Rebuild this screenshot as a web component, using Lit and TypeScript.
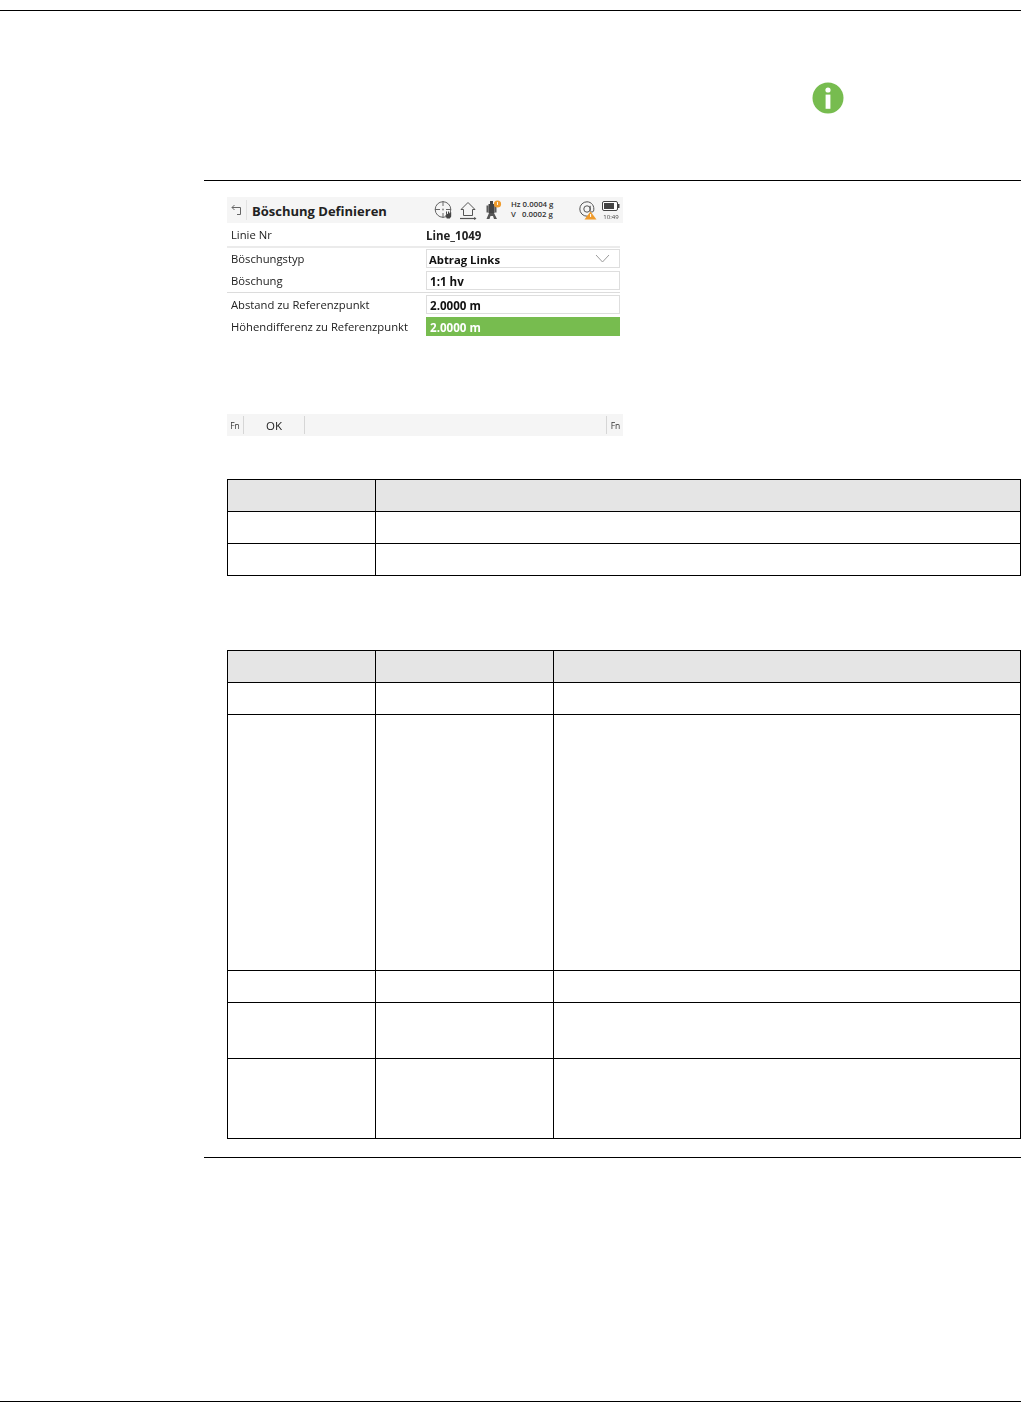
import { LitElement, html, css } from "lit";
import { customElement } from "lit/decorators.js";

@customElement("app-root")
export class AppRoot extends LitElement {
  static styles = css`
    :host { display: block; width: 1021px; height: 1402px; overflow: hidden; background: #fff; font-family: "Open Sans", "Liberation Sans", sans-serif; }
    .page { display: flex; flex-direction: column; height: 1402px; }
    .rule { height: 1px; background: #000; flex: none; }
    .rule-top { margin-top: 10px; }
    .rule-sec { margin-left: 204px; }
    .info { display: block; flex: none; margin: 71px 0 66px 812px; width: 32px; height: 32px; }
    .screen { flex: none; margin: 16px 0 0 227px; width: 396px; height: 239px; display: flex; flex-direction: column; color: #222; font-size: 11.25px; filter: blur(0.4px); }
    .head { flex: none; height: 26px; background: #f5f5f5; display: flex; align-items: center; }
    .back { flex: none; margin-left: 4px; width: 12px; height: 12px; }
    .head-sep { flex: none; width: 1px; height: 20px; background: #e2e2e2; margin-left: 3px; }
    .title { flex: none; width: 188px; margin-left: 5px; padding-top: 2px; font-weight: 700; font-size: 13px; color: #222; white-space: nowrap; }
    .ic { flex: none; display: block; }
    .ic-target { width: 20px; height: 20px; margin-left: -6px; }
    .ic-house { width: 20px; height: 20px; margin-left: 4px; }
    .ic-tps { width: 20px; height: 20px; margin-left: 5px; }
    .hz { flex: none; width: 65px; margin-left: 8px; margin-bottom: 2px; font-size: 7.8px; font-weight: 600; line-height: 10px; color: #333; white-space: pre; }
    .ic-at { width: 18px; height: 20px; margin-left: 3px; }
    .batt { flex: none; margin-left: 5px; width: 18px; display: flex; flex-direction: column; align-items: center; gap: 2px; padding-top: 1px; }
    .ic-batt { width: 18px; height: 10px; }
    .time { font-size: 6px; line-height: 8px; color: #444; }
    .row { flex: none; display: flex; align-items: center; height: 19px; }
    .label { flex: none; width: 199px; padding-left: 4px; box-sizing: border-box; white-space: nowrap; }
    .nr { height: 23px; }
    .val { font-weight: 700; font-size: 11.5px; white-space: nowrap; padding-top: 1px; }
    .div { flex: none; background: #ebebeb; margin-right: 3px; }
    .div-a { height: 2px; margin-bottom: 1px; }
    .div-b { height: 1px; background: #dcdcdc; margin: 2px 3px 2px 0; }
    .field { flex: none; width: 194px; height: 19px; box-sizing: border-box; border: 1px solid #dedede; display: flex; align-items: center; justify-content: space-between; padding: 1px 9px 0 2px; font-size: 11.3px; font-weight: 700; color: #111; white-space: nowrap; }
    .field.num { padding-left: 3px; font-size: 11.6px; }
    .field.sel { background: #77bc4f; border-color: #77bc4f; color: #fff; }
    .gap { flex: none; height: 3px; }
    .chev { width: 15px; height: 9px; flex: none; margin-top: -1px; }
    .spacer { flex: 1; }
    .foot { flex: none; height: 22px; background: #f5f5f5; display: flex; align-items: center; }
    .fn { flex: none; width: 16px; text-align: center; font-size: 8.5px; color: #333; }
    .fn-r { width: 15px; padding-left: 1px; }
    .vsep { flex: none; width: 1px; height: 18px; background: #d6d6d6; }
    .ok { flex: none; width: 60px; text-align: center; font-size: 11.5px; color: #222; }
    .foot-fill { flex: 1; }
    table { flex: none; border-collapse: collapse; table-layout: fixed; width: 794px; margin-left: 227px; }
    td, th { border: 1px solid #000; padding: 0; height: 31px; }
    th { background: #e5e5e5; }
    .t1 { margin-top: 43px; }
    .t2 { margin-top: 74px; }
    .h2 { height: 255px; }
    .h3 { height: 55px; }
    .h4 { height: 79px; }
    .rule-end { margin-top: 18px; }
    .rule-foot { margin-top: auto; }
  `;

  render() {
    return html`<div class="page">
      <div class="rule rule-top"></div>
      <svg class="info" viewBox="0 0 32 32"><circle cx="16" cy="16" r="15.5" fill="#77bc4f"/><circle cx="16" cy="8" r="2.6" fill="#fff"/><rect x="13.6" y="12.6" width="4.8" height="14.2" fill="#fff"/></svg>
      <div class="rule rule-sec"></div>
      <div class="screen">
        <div class="head">
          <svg class="back" viewBox="0 0 12 12" fill="none" stroke="#666" stroke-width="1"><path d="M1 3.5H9.5V10.5H6"/><path d="M3.5 1L1 3.5L3.5 6"/></svg>
          <div class="head-sep"></div>
          <div class="title">Böschung Definieren</div>
          <svg class="ic ic-target" viewBox="0 0 20 20" fill="none" stroke="#666" stroke-width="1"><circle cx="9" cy="9.5" r="7.8"/><path d="M9 1V6M9 13V18M1 9.5H6M12 9.5H17" /><circle cx="9" cy="9.5" r="1" fill="#888" stroke="none"/><path d="M12 11.5h1v2.5l1-.3v-2.2h1v2.2l1 .2v-1.6h1.2v4.2l-1.4 2h-3l-1.6-3.2h1z" fill="#444" stroke="none"/></svg>
          <svg class="ic ic-house" viewBox="0 0 20 20" fill="none" stroke="#555" stroke-width="1"><path d="M3 9.5L10 2.5L17 9.5H14.5V15.5H5.5V9.5Z"/><path d="M2 18.5H18" stroke-width="1.2"/><path d="M16 17l2.5 1.5L16 20" fill="#555" stroke="none"/></svg>
          <svg class="ic ic-tps" viewBox="0 0 20 20"><path d="M7 1h3v3h1.5v9H5.5V4H7z" fill="#444"/><path d="M3.5 5.5h2v7h-2zM11.5 5.5h2v7h-2z" fill="#5a5a5a"/><path d="M6 13h5l3 6h-3l-1-3H7.5l-1 3h-3z" fill="#555"/><circle cx="14.5" cy="4" r="3.6" fill="#ef9b2c"/><rect x="14.1" y="2" width=".9" height="3" fill="#fff"/></svg>
          <div class="hz">Hz 0.0004 g
V   0.0002 g</div>
          <svg class="ic ic-at" viewBox="0 0 18 20" fill="none" stroke="#555" stroke-width="1"><circle cx="8" cy="9" r="3.2"/><path d="M11.2 5.8V10.5a1.8 1.8 0 0 0 3.4 0.5C15.8 6 12.5 1.8 8 1.8a7.2 7.2 0 0 0 0 14.4h2"/><path d="M11.5 11.5L17.5 19.5H5.5Z" fill="#ef9b2c" stroke="none"/><rect x="11.1" y="14" width="1" height="3" fill="#fff" stroke="none"/></svg>
          <div class="batt">
            <svg class="ic ic-batt" viewBox="0 0 18 10"><rect x=".5" y=".5" width="15" height="9" rx="1.5" fill="#fff" stroke="#444"/><rect x="2" y="2" width="10" height="6" fill="#444"/><rect x="16" y="3" width="1.5" height="4" fill="#444"/></svg>
            <div class="time">10:49</div>
          </div>
        </div>
        <div class="row nr"><div class="label">Linie Nr</div><div class="val">Line_1049</div></div>
        <div class="div div-a"></div>
        <div class="row"><div class="label">Böschungstyp</div><div class="field"><span>Abtrag Links</span><svg class="chev" viewBox="0 0 15 9" fill="none" stroke="#9a9a9a" stroke-width="1"><path d="M1 1L7.5 8L14 1"/></svg></div></div>
        <div class="gap"></div>
        <div class="row"><div class="label">Böschung</div><div class="field num">1:1 hv</div></div>
        <div class="div div-b"></div>
        <div class="row"><div class="label">Abstand zu Referenzpunkt</div><div class="field num">2.0000 m</div></div>
        <div class="gap"></div>
        <div class="row"><div class="label">Höhendifferenz zu Referenzpunkt</div><div class="field num sel">2.0000 m</div></div>
        <div class="spacer"></div>
        <div class="foot">
          <div class="fn">Fn</div><div class="vsep"></div>
          <div class="ok">OK</div><div class="vsep"></div>
          <div class="foot-fill"></div>
          <div class="vsep"></div><div class="fn fn-r">Fn</div>
        </div>
      </div>
      <table class="t1">
        <colgroup><col style="width:148px"/><col/></colgroup>
        <tr><th></th><th></th></tr>
        <tr><td></td><td></td></tr>
        <tr><td></td><td></td></tr>
      </table>
      <table class="t2">
        <colgroup><col style="width:148px"/><col style="width:178px"/><col/></colgroup>
        <tr><th></th><th></th><th></th></tr>
        <tr><td></td><td></td><td></td></tr>
        <tr><td class="h2"></td><td></td><td></td></tr>
        <tr><td></td><td></td><td></td></tr>
        <tr><td class="h3"></td><td></td><td></td></tr>
        <tr><td class="h4"></td><td></td><td></td></tr>
      </table>
      <div class="rule rule-sec rule-end"></div>
      <div class="rule rule-foot"></div>
    </div>`;
  }
}
